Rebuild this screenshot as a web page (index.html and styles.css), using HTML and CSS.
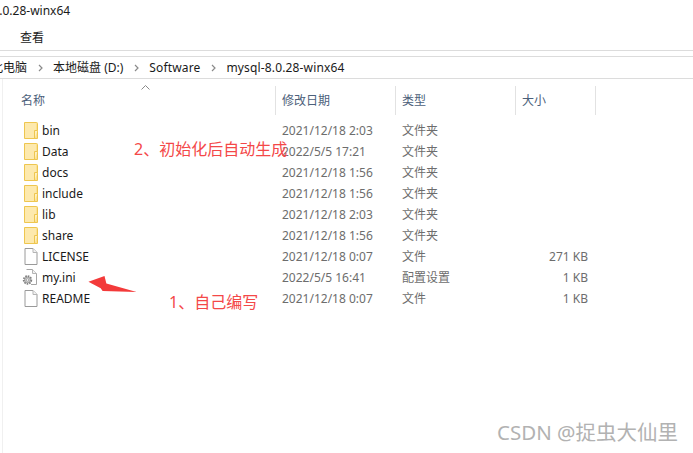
FILE: index.html
```html
<!DOCTYPE html>
<html lang="zh">
<head>
<meta charset="utf-8">
<title>mysql-8.0.28-winx64</title>
<link rel="stylesheet" href="styles.css">
</head>
<body>
<svg class="defs" width="0" height="0" aria-hidden="true">
  <symbol id="folder" viewBox="0 0 14 17">
    <path d="M.5.5h12a1 1 0 0 1 1 1v15H.5z" fill="#fbe08f" stroke="#eec64f"/>
    <path d="M1 1h11v9l-1 6H1z" fill="#fde9ad"/>
    <path d="M10.5 16.5V8.5h3" fill="#fff0c0" stroke="#eec64f"/>
  </symbol>
  <symbol id="file" viewBox="0 0 13 17">
    <path d="M.5.5h8l4 4v12H.5z" fill="#fff" stroke="#9a9a9a"/>
    <path d="M8.5.5v4h4" fill="#f2f2f2" stroke="#b5b5b5"/>
  </symbol>
  <symbol id="ini" viewBox="0 0 15 17">
    <path d="M4.500 .5h6l4 4v11H9" fill="#fff" stroke="#a5a5a5"/>
    <path d="M10.500 .5v4h4" fill="#f2f2f2" stroke="#b5b5b5"/>
    <circle cx="5.500" cy="11" r="3.600" fill="none" stroke="#7d7d7d" stroke-width="2.200" stroke-dasharray="1.500 .9"/>
    <circle cx="5.500" cy="11" r="3" fill="#c9c9c9" stroke="#8a8a8a" stroke-width=".7"/>
    <circle cx="5.500" cy="11" r="1.200" fill="#fff" stroke="#8a8a8a" stroke-width=".6"/>
  </symbol>
</svg>

<div class="window">
  <div class="title"><span class="title-text">mysql-8.0.28-winx64</span></div>
  <div class="ribbon"><span class="tab">查看</span></div>
  <nav class="address">
    <span class="crumb first">此电脑</span>
    <svg class="sep" viewBox="0 0 5 8"><path d="M1 1l3 3-3 3" fill="none" stroke="#8a8a8a" stroke-width="1.200"/></svg>
    <span class="crumb">本地磁盘 (D:)</span>
    <svg class="sep" viewBox="0 0 5 8"><path d="M1 1l3 3-3 3" fill="none" stroke="#8a8a8a" stroke-width="1.200"/></svg>
    <span class="crumb crumb-latin">Software</span>
    <svg class="sep" viewBox="0 0 5 8"><path d="M1 1l3 3-3 3" fill="none" stroke="#8a8a8a" stroke-width="1.200"/></svg>
    <span class="crumb crumb-latin">mysql-8.0.28-winx64</span>
  </nav>

  <main class="list">
    <div class="head">
      <div class="hcell h-name">名称
        <svg class="sort" viewBox="0 0 9 5"><path d="M.5 4.500l4-4 4 4" fill="none" stroke="#8a8a8a"/></svg>
      </div>
      <div class="hcell h-date">修改日期</div>
      <div class="hcell h-type">类型</div>
      <div class="hcell h-size">大小</div>
    </div>

    <div class="row"><div class="name"><svg class="ico"><use href="#folder"/></svg>bin</div><div class="date">2021/12/18 2:03</div><div class="type">文件夹</div><div class="size"></div></div>
    <div class="row"><div class="name"><svg class="ico"><use href="#folder"/></svg>Data</div><div class="date">2022/5/5 17:21</div><div class="type">文件夹</div><div class="size"></div></div>
    <div class="row"><div class="name"><svg class="ico"><use href="#folder"/></svg>docs</div><div class="date">2021/12/18 1:56</div><div class="type">文件夹</div><div class="size"></div></div>
    <div class="row"><div class="name"><svg class="ico"><use href="#folder"/></svg>include</div><div class="date">2021/12/18 1:56</div><div class="type">文件夹</div><div class="size"></div></div>
    <div class="row"><div class="name"><svg class="ico"><use href="#folder"/></svg>lib</div><div class="date">2021/12/18 2:03</div><div class="type">文件夹</div><div class="size"></div></div>
    <div class="row"><div class="name"><svg class="ico"><use href="#folder"/></svg>share</div><div class="date">2021/12/18 1:56</div><div class="type">文件夹</div><div class="size"></div></div>
    <div class="row"><div class="name"><svg class="ico"><use href="#file"/></svg>LICENSE</div><div class="date">2021/12/18 0:07</div><div class="type">文件</div><div class="size">271 KB</div></div>
    <div class="row"><div class="name"><svg class="ico ico-ini"><use href="#ini"/></svg>my.ini</div><div class="date">2022/5/5 16:41</div><div class="type">配置设置</div><div class="size">1 KB</div></div>
    <div class="row"><div class="name"><svg class="ico"><use href="#file"/></svg>README</div><div class="date">2021/12/18 0:07</div><div class="type">文件</div><div class="size">1 KB</div></div>
  </main>
</div>

<div class="note note-two">2、初始化后自动生成</div>
<div class="note note-one">1、自己编写</div>
<svg class="arrow" viewBox="0 0 52 18"><path d="M0 6L17 0l2 8 32 9-36-1-2-3z" fill="#f33a3a"/></svg>
<div class="watermark">CSDN @捉虫大仙里</div>
</body>
</html>
```

FILE: styles.css
```css
* { box-sizing: border-box; }
html, body { margin: 0; padding: 0; }
body {
  position: relative;
  width: 693px;
  height: 453px;
  overflow: hidden;
  background: #fff;
  color: #1a1a1a;
  font-family: "Noto Sans", "Noto Sans CJK SC", sans-serif;
  font-size: 12px;
}
.defs { position: absolute; }
.window { display: flex; flex-direction: column; height: 100%; }
.title { height: 26px; padding-top: 3px; line-height: 16px; white-space: nowrap; overflow: hidden; }
.title-text { display: block; margin-left: -45px; }
.ribbon { height: 25px; padding-left: 20px; line-height: 24px; border-bottom: 1px solid #dcdcdc; }
.address {
  display: flex;
  align-items: center;
  height: 23px;
  margin-top: 5px;
  border-top: 1px solid #dcdcdc;
  border-bottom: 1px solid #dcdcdc;
  white-space: nowrap;
  overflow: hidden;
}
.crumb { line-height: 20px; }
.crumb.first { margin-left: -9px; }
.crumb-latin { letter-spacing: .15px; }
.sep { width: 5px; height: 8px; margin: 0 10.500px; flex: none; }
.list { flex: 1; margin-left: 2px; padding-top: 7px; border-left: 1px solid #f0f0f0; }
.head, .row { display: grid; grid-template-columns: 273px 120px 120px 80px; }
.head { height: 26px; margin-bottom: 8px; color: #4c607a; }
.hcell { position: relative; line-height: 29px; padding-left: 6px; border-right: 1px solid #e2e2e2; }
.h-name { padding-left: 18px; }
.sort { position: absolute; left: 138px; top: -1px; width: 9px; height: 5px; }
.row { height: 21px; line-height: 21px; color: #6d6d6d; }
.name { display: flex; align-items: center; padding-left: 21px; color: #1a1a1a; white-space: nowrap; }
.ico { width: 14px; height: 17px; margin-right: 4px; flex: none; }
.ico-ini { width: 15px; margin-left: -2px; margin-right: 5px; }
.date, .type { padding-left: 6px; }
.size { padding-right: 8px; text-align: right; }
.note {
  position: absolute;
  color: #f44848;
  font-size: 16px;
  line-height: 22px;
  white-space: nowrap;
}
.note-two { left: 134px; top: 138px; }
.note-one { left: 169px; top: 291px; }
.arrow { position: absolute; left: 88px; top: 276px; width: 50px; height: 17px; }
.watermark {
  position: absolute;
  left: 497px;
  top: 420px;
  color: #b2b2b2;
  font-size: 20.500px;
  line-height: 25px;
  white-space: nowrap;
}
```
